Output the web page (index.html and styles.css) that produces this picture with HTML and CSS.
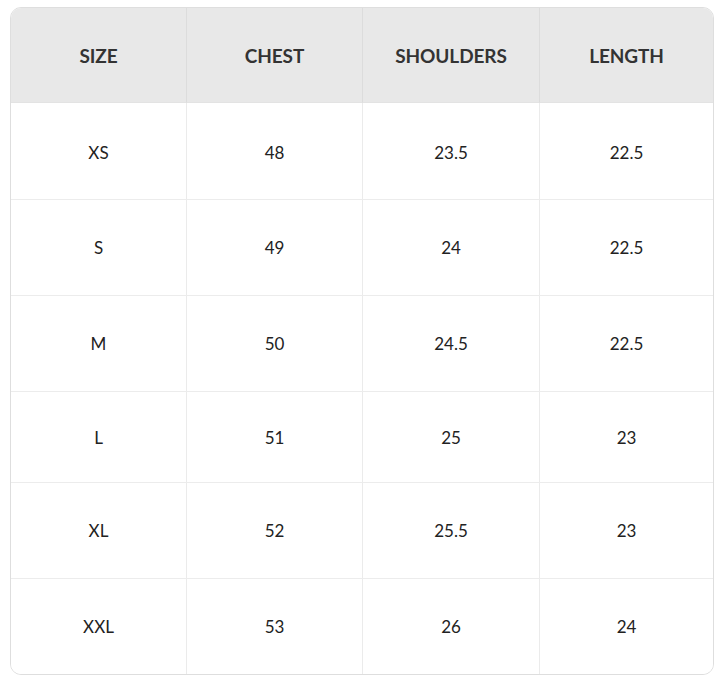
FILE: index.html
```html
<!DOCTYPE html>
<html>
<head>
<meta charset="utf-8">
<link rel="stylesheet" href="styles.css">
</head>
<body>
<div class="wrap">
<table class="size-table">
  <colgroup>
    <col class="c1"><col class="c2"><col class="c3"><col class="c4">
  </colgroup>
  <thead>
    <tr class="head"><th>SIZE</th><th>CHEST</th><th>SHOULDERS</th><th>LENGTH</th></tr>
  </thead>
  <tbody>
    <tr class="r1"><td>XS</td><td>48</td><td>23.5</td><td>22.5</td></tr>
    <tr class="r2"><td>S</td><td>49</td><td>24</td><td>22.5</td></tr>
    <tr class="r3"><td>M</td><td>50</td><td>24.5</td><td>22.5</td></tr>
    <tr class="r4"><td>L</td><td>51</td><td>25</td><td>23</td></tr>
    <tr class="r5"><td>XL</td><td>52</td><td>25.5</td><td>23</td></tr>
    <tr class="r6"><td>XXL</td><td>53</td><td>26</td><td>24</td></tr>
  </tbody>
</table>
</div>
</body>
</html>
```

FILE: styles.css
```css
html, body {
  margin: 0;
  padding: 0;
  background: #ffffff;
}

.wrap {
  padding: 7px 10px 0 10px;
}

.size-table {
  width: 704px;
  border-collapse: separate;
  border-spacing: 0;
  border: 1px solid #dedede;
  border-radius: 11px;
  overflow: hidden;
  table-layout: fixed;
  font-family: "Lato", "Open Sans", sans-serif;
  color: #222;
}

.c1 { width: 176px; }
.c2 { width: 176px; }
.c3 { width: 177px; }
.c4 { width: auto; }

.size-table th,
.size-table td {
  text-align: center;
  vertical-align: middle;
  padding: 0;
  border-right: 1px solid #ebebeb;
  border-bottom: 1px solid #ececec;
}

.size-table th:last-child,
.size-table td:last-child {
  border-right: none;
}

.size-table tbody tr:last-child td {
  border-bottom: none;
}

.size-table th {
  background: #e8e8e8;
  font-size: 19px;
  font-weight: 700;
  color: #333;
  letter-spacing: -0.1px;
  height: 94px;
  border-right-color: #dcdcdc;
  border-bottom-color: #e3e3e3;
}

.size-table td {
  font-size: 17px;
  font-weight: 400;
  background: #fff;
}

.r1 td { height: 93px; padding-top: 3px; }
.r2 td { height: 95px; }
.r3 td { height: 95px; }
.r4 td { height: 90px; }
.r5 td { height: 95px; }
.r6 td { height: 95px; }
```
